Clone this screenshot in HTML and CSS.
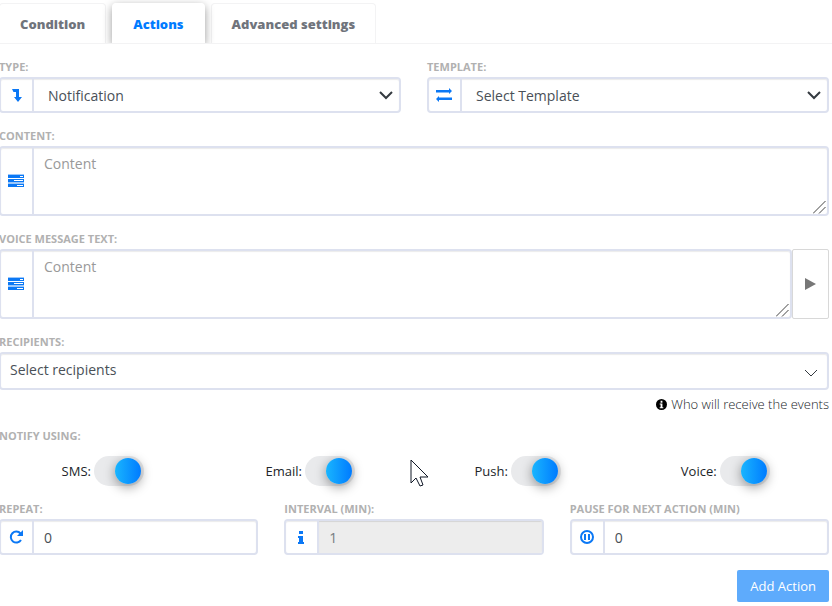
FILE: index.html
```
<!DOCTYPE html>
<html lang="en">
<head>
<meta charset="utf-8">
<title>Actions</title>
<link rel="stylesheet" href="styles.css">
</head>
<body>
<main class="panel">
  <nav class="tabs">
    <a class="tab" href="#condition">Condition</a>
    <a class="tab active" href="#actions">Actions</a>
    <a class="tab" href="#advanced">Advanced settings</a>
  </nav>
  <form class="form">
    <div class="row">
      <div class="field">
        <label class="caption" for="type">Type:</label>
        <div class="group">
          <span class="addon"><svg width="16" height="16" viewBox="0 0 16 16"><path d="M4 2h7v8h3l-4 5-4-5h2V5H5.500z"/></svg></span>
          <select class="control picker" id="type"><option>Notification</option></select>
          <svg class="chevron" width="14" height="9" viewBox="0 0 14 9"><path d="M1 1l6 6 6-6"/></svg>
        </div>
      </div>
      <div class="field">
        <label class="caption" for="template">Template:</label>
        <div class="group">
          <span class="addon"><svg width="16" height="16" viewBox="0 0 16 16"><path d="M0 3h13V1l3 3-3 3V5.500H0zM16 10.500H3V9l-3 3 3 3v-2h13z"/></svg></span>
          <select class="control picker" id="template"><option>Select Template</option></select>
          <svg class="chevron" width="14" height="9" viewBox="0 0 14 9"><path d="M1 1l6 6 6-6"/></svg>
        </div>
      </div>
    </div>
    <div class="field">
      <label class="caption" for="content">Content:</label>
      <div class="group">
        <span class="addon"><svg width="16" height="14" viewBox="0 0 16 14"><path class="tint" d="M0 0h16v1H0zM0 8h16v2H0z"/><path d="M0 1h16v3H0zM0 5h16v3H0zM0 10h16v3H0z"/><path class="slot" d="M12 2h3v1h-3zM6 6h9v1H6zM9 11h6v1H9z"/></svg></span>
        <textarea class="control area" id="content" placeholder="Content"></textarea>
        <svg class="grip" width="13" height="13" viewBox="0 0 13 13"><path d="M0 12.500L12.500 0M6 12.500L12.500 6"/></svg>
      </div>
    </div>
    <div class="field">
      <label class="caption" for="voice-text">Voice message text:</label>
      <div class="with-action">
        <div class="group">
          <span class="addon"><svg width="16" height="14" viewBox="0 0 16 14"><path class="tint" d="M0 0h16v1H0zM0 8h16v2H0z"/><path d="M0 1h16v3H0zM0 5h16v3H0zM0 10h16v3H0z"/><path class="slot" d="M12 2h3v1h-3zM6 6h9v1H6zM9 11h6v1H9z"/></svg></span>
          <textarea class="control area" id="voice-text" placeholder="Content"></textarea>
          <svg class="grip" width="13" height="13" viewBox="0 0 13 13"><path d="M0 12.500L12.500 0M6 12.500L12.500 6"/></svg>
        </div>
        <button class="play" type="button" aria-label="Play"><svg width="11" height="12" viewBox="0 0 11 12"><path d="M0 0l11 6-11 6z"/></svg></button>
      </div>
    </div>
    <div class="field">
      <label class="caption" for="recipients">Recipients:</label>
      <div class="group">
        <select class="control recipients" id="recipients"><option>Select recipients</option></select>
        <svg class="chevron thin" width="12" height="8" viewBox="0 0 12 8"><path d="M0 1l6 6 6-6"/></svg>
      </div>
      <p class="hint"><svg width="11" height="11" viewBox="0 0 12 12"><circle cx="6" cy="6" r="6"/><path class="slot" d="M5 2h2v2H5zM4 5h3v4h1v1H4V9h1V6H4z"/></svg>Who will receive the events</p>
    </div>
    <fieldset class="notify">
      <legend class="caption">Notify using:</legend>
      <div class="switches">
        <label class="switch">SMS:<input type="checkbox" checked></label>
        <label class="switch">Email:<input type="checkbox" checked></label>
        <label class="switch">Push:<input type="checkbox" checked></label>
        <label class="switch">Voice:<input type="checkbox" checked></label>
      </div>
    </fieldset>
    <div class="row thirds">
      <div class="field">
        <label class="caption" for="repeat">Repeat:</label>
        <div class="group">
          <span class="addon"><svg width="14" height="14" viewBox="0 0 14 14"><path class="line" d="M11.500 3.500A5.500 5.500 0 1 0 12 10"/><path d="M14 0v6H8z"/></svg></span>
          <input class="control text" id="repeat" type="text" value="0">
        </div>
      </div>
      <div class="field">
        <label class="caption" for="interval">Interval (min):</label>
        <div class="group">
          <span class="addon"><svg width="6" height="13" viewBox="0 0 6 13"><path d="M1 0h4v3H1zM0 5h5v6h1v2H0v-2h1V7H0z"/></svg></span>
          <input class="control text" id="interval" type="text" value="1" disabled>
        </div>
      </div>
      <div class="field">
        <label class="caption" for="pause">Pause for next action (min)</label>
        <div class="group">
          <span class="addon"><svg width="14" height="14" viewBox="0 0 14 14"><circle class="ring" cx="7" cy="7" r="6"/><path d="M4 4h2v6H4zM8 4h2v6H8z"/></svg></span>
          <input class="control text" id="pause" type="text" value="0">
        </div>
      </div>
    </div>
    <button class="submit" type="button">Add Action</button>
  </form>
  <svg class="cursor" width="19" height="28" viewBox="0 0 19 28"><path d="M1 1v23l5-5 4 8 3-1-3-8h8z"/></svg>
</main>
</body>
</html>
```
FILE: styles.css
```
* { box-sizing: border-box; }
body {
  margin: 0;
  overflow-x: hidden;
  background: #fff;
  color: #212529;
  font: 13px/16px "Open Sans", sans-serif;
}
input, select, textarea, button { font-family: inherit; margin: 0; }
.panel { position: relative; overflow: hidden; }

.tabs {
  display: flex;
  gap: 6px;
  height: 44px;
  padding: 3px 3px 0 0;
  margin-left: -1px;
  border-bottom: 1px solid #f3f3f4;
  overflow: hidden;
}
.tab {
  padding: 12px 20px;
  border: 1px solid #f3f3f4;
  border-bottom: 0;
  border-radius: 4px 4px 0 0;
  color: #70747c;
  font-weight: 800;
  text-decoration: none;
}
.tab.active {
  position: relative;
  color: #007bff;
  background: #fff;
  border-color: #fff;
  box-shadow: 0 3px 10px rgba(0, 0, 0, .4);
}

.form {
  display: flex;
  flex-direction: column;
  gap: 15px;
  margin: 15px 3px 4px -1px;
}
.row { display: grid; grid-template-columns: repeat(2, minmax(0, 1fr)); gap: 26px; }
.thirds { grid-template-columns: repeat(3, minmax(0, 1fr)); }
.caption {
  display: block;
  padding: 0;
  margin-bottom: 2px;
  color: #b1b1b1;
  font-size: 11px;
  font-weight: 700;
  line-height: 16px;
  text-transform: uppercase;
}
.group {
  position: relative;
  display: flex;
  flex: 1;
  border: 2px solid #dde1ef;
  border-radius: 4px;
  background: #fff;
  box-shadow: inset 0 1px 1px rgba(0, 0, 0, .08);
  overflow: hidden;
}
.addon {
  display: flex;
  flex: none;
  align-items: center;
  justify-content: center;
  width: 33px;
  padding-right: 1px;
  border-right: 2px solid #dde1ef;
  fill: #0b78f5;
}
.tint { fill: #9cc8fb; }
.slot { fill: #fff; }
.line, .ring { fill: none; stroke: #0b78f5; stroke-width: 2; }
.control {
  flex: 1;
  min-width: 0;
  height: 32px;
  border: 0;
  outline: 0;
  background: transparent;
  color: #495057;
  font-size: 14px;
  line-height: 20px;
  appearance: none;
}
.picker { padding: 2px 32px 0 14px; }
.text { padding: 0 10px; }
.text:disabled { background: #ededed; color: #777c80; box-shadow: inset 0 1px 1px rgba(0, 0, 0, .1); }
.area { display: block; height: 66px; padding: 6px 10px; resize: vertical; }
.area::placeholder { color: #999; opacity: 1; }
.area::-webkit-resizer { background: transparent; }
.grip {
  position: absolute;
  right: 1px;
  bottom: 0;
  fill: none;
  stroke: #444;
  pointer-events: none;
}
.recipients { height: 34px; padding: 0 32px 2px 9px; }
.chevron {
  position: absolute;
  right: 6px;
  top: 12px;
  fill: none;
  stroke: #343a40;
  stroke-width: 2;
  pointer-events: none;
}
.chevron.thin { right: 10px; top: 15px; stroke-width: 1; }
.with-action { display: flex; }
.play {
  display: flex;
  align-items: center;
  justify-content: center;
  width: 37px;
  padding: 0;
  border: 1px solid #d8d8d8;
  border-radius: 2px;
  background: #fff;
  fill: #777;
}
.hint {
  display: flex;
  align-items: center;
  justify-content: flex-end;
  gap: 4px;
  margin: 6px 0 0;
  color: #212529;
  font-weight: 300;
}

.notify { min-width: 0; margin: 1px 0 0; padding: 0; border: 0; }
.switches {
  display: grid;
  grid-template-columns: repeat(4, 1fr);
  justify-items: center;
  padding-top: 10px;
}
.switch { display: flex; align-items: center; gap: 3px; }
.switch input {
  appearance: none;
  display: flex;
  justify-content: flex-end;
  align-items: center;
  width: 50px;
  height: 30px;
  padding-right: 3px;
  border-radius: 15px;
  background: #e9eaec;
}
.switch input::before {
  content: "";
  width: 26px;
  height: 26px;
  border-radius: 50%;
  background: linear-gradient(90deg, #19b5fe, #007bff);
  box-shadow: 0 3px 12px rgba(0, 0, 0, .4);
}
.submit {
  align-self: flex-end;
  height: 32px;
  padding: 0 13px;
  border: 0;
  border-radius: 2px;
  background: #5eabfc;
  color: #fff;
  font-size: 13px;
}
.cursor {
  position: absolute;
  left: 410px;
  top: 459px;
  fill: #fff;
  stroke: #111827;
  pointer-events: none;
}
```
